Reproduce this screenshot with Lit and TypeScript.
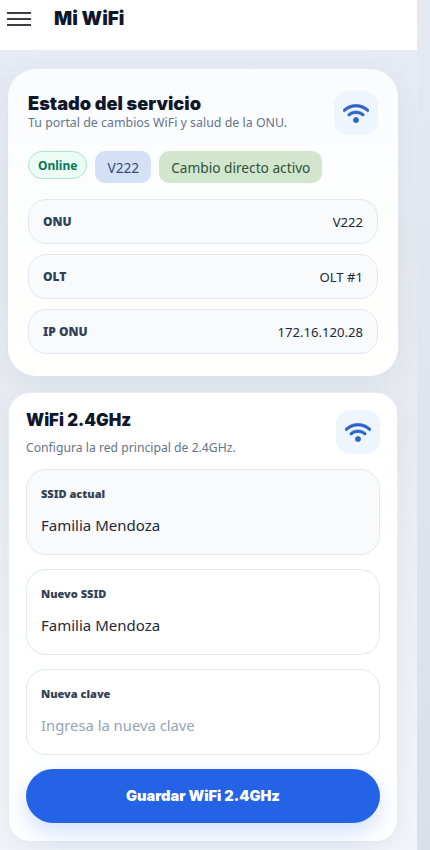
import { LitElement, html, css } from "lit";
import { customElement } from "lit/decorators.js";

const wifi = html`<svg class="wifi" viewBox="0 0 640 512" aria-hidden="true">
  <path fill="currentColor" stroke="currentColor" stroke-width="16" stroke-linejoin="round" d="M54.2 202.9C123.2 136.7 216.8 96 320 96s196.8 40.7 265.8 106.9c12.8 12.2 33 11.8 45.2-.9s11.8-33-.9-45.2C549.7 79.5 440.4 32 320 32S90.3 79.5 9.8 156.7C-2.9 169-3.3 189.2 8.9 202s32.5 13.2 45.2 .9zM320 256c56.8 0 108.6 21.1 148.2 56c13.3 11.7 33.5 10.4 45.2-2.8s10.4-33.5-2.8-45.2C459.8 219.2 393 192 320 192s-139.8 27.2-190.5 72c-13.3 11.7-14.5 31.9-2.8 45.2s31.9 14.5 45.2 2.8c39.5-34.9 91.3-56 148.2-56zm64 160a64 64 0 1 0 -128 0 64 64 0 1 0 128 0z"/>
</svg>`;

@customElement("app-root")
export class AppRoot extends LitElement {
  static styles = css`
    :host {
      display: grid;
      grid-template-columns: 417px 13px;
      width: 430px;
      height: 850px;
      overflow: hidden;
      font-family: "Noto Sans", "Open Sans", sans-serif;
      color: #0f172a;
    }
    .main {
      display: flex;
      flex-direction: column;
      background: linear-gradient(180deg, #e6ebf5 0%, #e4e8ef 30%, #f3f5f9 100%);
      min-width: 0;
    }
    .strip { background: linear-gradient(180deg, #e4e9f2 0%, #d9e0ea 100%); }
    header {
      height: 50px;
      flex: none;
      background: #fff;
      display: flex;
      align-items: flex-start;
      padding: 8px 0 0 7px;
      gap: 23px;
      box-sizing: border-box;
    }
    .burger {
      width: 24px;
      display: flex;
      flex-direction: column;
      gap: 4px;
      padding-top: 4px;
    }
    .burger span { height: 2px; background: #3a3f47; display: block; }
    .brand, h2 {
      font-family: Inter, "Noto Sans", sans-serif;
      font-weight: 900;
      line-height: 22px;
      margin: 0;
    }
    .brand { font-size: 19px; }
    .status h2 { font-size: 18.2px; line-height: 23px; }
    .wifi-card h2 { font-size: 16.8px; }
    .content {
      display: flex;
      flex-direction: column;
      gap: 16px;
      padding: 19px 19px 0 8px;
    }
    .card {
      background: #fff;
      box-shadow: 0 8px 24px rgba(148, 163, 184, 0.14);
      box-sizing: border-box;
    }
    .status {
      border-radius: 28px;
      padding: 23px 20px 22px;
      background: linear-gradient(180deg, #fbfcfe, #fffffd);
    }
    .wifi-card {
      border-radius: 22px;
      padding: 16px 17px 18px;
      border: 1px solid #e8ecf2;
      display: flex;
      flex-direction: column;
    }
    .head {
      display: flex;
      justify-content: space-between;
      align-items: flex-start;
    }
    .sub {
      margin: 0;
      font-size: 12.4px;
      line-height: 16px;
      color: #64748b;
    }
    .status .head { margin-bottom: 16px; }
    .status .tile { margin-top: -1px; }
    .wifi-card .sub { margin-top: 9px; font-size: 12.2px; }
    .wifi-card .head { margin-bottom: 13px; }
    .wifi-card .tile { margin-top: 1px; }
    .tile {
      width: 44px;
      height: 44px;
      border-radius: 14px;
      background: #eff5fd;
      display: flex;
      align-items: center;
      justify-content: center;
      color: #2b63c9;
      flex: none;
    }
    .wifi { width: 26px; height: 21px; display: block; }
    .chips { display: flex; gap: 8px; align-items: flex-start; margin-bottom: 16px; }
    .chip {
      height: 32px;
      padding: 0 12px;
      border-radius: 10px;
      font-size: 13.7px;
      display: flex;
      align-items: center;
      box-sizing: border-box;
    }
    .online {
      height: 28px;
      border-radius: 14px;
      background: #ecfdf5;
      border: 1px solid #a7e8cf;
      color: #047857;
      font-size: 12px;
      font-weight: 700;
      padding: 0 9px;
    }
    .model { background: #d4e0f5; color: #334e75; }
    .direct { background: #d2e6cd; color: #2f5238; }
    .rows { display: flex; flex-direction: column; gap: 10px; }
    .row {
      height: 45px;
      box-sizing: border-box;
      border: 1px solid #e2e8f0;
      border-radius: 18px;
      background: #f8fafc;
      padding: 0 14px;
      display: flex;
      justify-content: space-between;
      align-items: center;
      font-size: 13.1px;
    }
    .row b { font-size: 12px; font-weight: 900; color: #334155; }
    .row span { color: #1e293b; }
    .fields { display: flex; flex-direction: column; gap: 14px; }
    .field {
      height: 86px;
      box-sizing: border-box;
      border: 1px solid #e2e8f0;
      border-radius: 20px;
      padding: 16px 14px 0;
      display: flex;
      flex-direction: column;
      background: #fff;
    }
    .field.current { background: #f8fafc; }
    .field label { font-size: 11px; line-height: 16px; font-weight: 900; color: #334155; }
    .field .val { font-size: 15px; line-height: 20px; margin-top: 13px; color: #1e293b; }
    .field .ph { color: #94a3b8; font-size: 14.8px; }
    button {
      margin-top: 14px;
      height: 54px;
      width: 100%;
      border: 0;
      border-radius: 27px;
      background: #2563e6;
      color: #fff;
      font: 900 14.6px Inter, "Noto Sans", sans-serif;
      box-shadow: 0 10px 22px rgba(37, 99, 235, 0.2);
    }
  `;

  render() {
    return html`
      <div class="main">
        <header>
          <div class="burger"><span></span><span></span><span></span></div>
          <div class="brand">Mi WiFi</div>
        </header>
        <div class="content">
          <section class="card status">
            <div class="head">
              <div>
                <h2>Estado del servicio</h2>
                <p class="sub">Tu portal de cambios WiFi y salud de la ONU.</p>
              </div>
              <div class="tile">${wifi}</div>
            </div>
            <div class="chips">
              <div class="chip online">Online</div>
              <div class="chip model">V222</div>
              <div class="chip direct">Cambio directo activo</div>
            </div>
            <div class="rows">
              <div class="row"><b>ONU</b><span>V222</span></div>
              <div class="row"><b>OLT</b><span>OLT #1</span></div>
              <div class="row"><b>IP ONU</b><span>172.16.120.28</span></div>
            </div>
          </section>
          <section class="card wifi-card">
            <div class="head">
              <div>
                <h2>WiFi 2.4GHz</h2>
                <p class="sub">Configura la red principal de 2.4GHz.</p>
              </div>
              <div class="tile">${wifi}</div>
            </div>
            <div class="fields">
              <div class="field current"><label>SSID actual</label><div class="val">Familia Mendoza</div></div>
              <div class="field"><label>Nuevo SSID</label><div class="val">Familia Mendoza</div></div>
              <div class="field"><label>Nueva clave</label><div class="val ph">Ingresa la nueva clave</div></div>
            </div>
            <button>Guardar WiFi 2.4GHz</button>
          </section>
        </div>
      </div>
      <div class="strip"></div>
    `;
  }
}
